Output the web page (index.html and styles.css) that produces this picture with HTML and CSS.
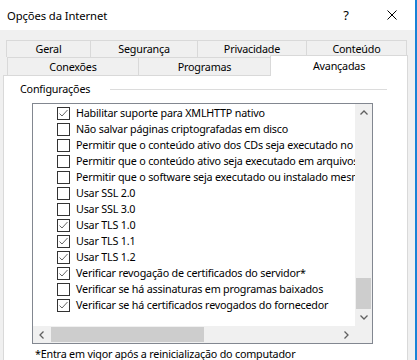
FILE: index.html
```html
<!DOCTYPE html>
<html lang="pt">
<head>
    <meta charset="UTF-8">
    <title>Opções da Internet</title>
    <link rel="stylesheet" href="styles.css">
</head>
<body>
<div class="window">
    <div class="titlebar">
        <span class="title">Opções da Internet</span>
        <span class="tbtn help">?</span>
        <span class="tbtn close">
            <svg width="10" height="10" viewBox="0 0 10 10"><path d="M0.5 0.5L9.5 9.5M9.5 0.5L0.5 9.5" stroke="#000" stroke-width="1" fill="none"/></svg>
        </span>
    </div>
    <div class="frame">
        <div class="tabrow row1">
            <div class="tab t-geral">Geral</div>
            <div class="tab t-seg">Segurança</div>
            <div class="tab t-priv">Privacidade</div>
            <div class="tab t-cont">Conteúdo</div>
        </div>
        <div class="tabrow row2">
            <div class="tab t-conex">Conexões</div>
            <div class="tab t-prog">Programas</div>
            <div class="tab t-avanc active">Avançadas</div>
        </div>
        <div class="panel">
            <div class="group-head">
                <span>Configurações</span>
                <span class="rule"></span>
            </div>
            <div class="listbox">
                <div class="items">
                    <div class="item"><span class="cb checked"></span>Habilitar suporte para XMLHTTP nativo</div>
                    <div class="item"><span class="cb"></span>Não salvar páginas criptografadas em disco</div>
                    <div class="item"><span class="cb"></span>Permitir que o conteúdo ativo dos CDs seja executado no computador</div>
                    <div class="item"><span class="cb"></span>Permitir que o conteúdo ativo seja executado em arquivos do computador</div>
                    <div class="item"><span class="cb"></span>Permitir que o software seja executado ou instalado mesmo que a assinatura seja inválida</div>
                    <div class="item"><span class="cb"></span>Usar SSL 2.0</div>
                    <div class="item"><span class="cb"></span>Usar SSL 3.0</div>
                    <div class="item"><span class="cb checked"></span>Usar TLS 1.0</div>
                    <div class="item"><span class="cb checked"></span>Usar TLS 1.1</div>
                    <div class="item"><span class="cb checked"></span>Usar TLS 1.2</div>
                    <div class="item"><span class="cb checked"></span>Verificar revogação de certificados do servidor*</div>
                    <div class="item"><span class="cb"></span>Verificar se há assinaturas em programas baixados</div>
                    <div class="item"><span class="cb checked"></span>Verificar se há certificados revogados do fornecedor</div>
                </div>
                <div class="vscroll">
                    <span class="arrow"><svg width="8" height="5" viewBox="0 0 8 5"><path d="M0.5 4.5L4 1L7.5 4.5" stroke="#606060" stroke-width="1.3" fill="none"/></svg></span>
                    <span class="vtrack"><span class="vthumb"></span></span>
                    <span class="arrow"><svg width="8" height="5" viewBox="0 0 8 5"><path d="M0.5 0.5L4 4L7.5 0.5" stroke="#606060" stroke-width="1.3" fill="none"/></svg></span>
                </div>
                <div class="hscroll">
                    <span class="arrow"><svg width="5" height="8" viewBox="0 0 5 8"><path d="M4.5 0.5L1 4L4.5 7.5" stroke="#606060" stroke-width="1.3" fill="none"/></svg></span>
                    <span class="htrack"><span class="hthumb"></span></span>
                    <span class="arrow"><svg width="5" height="8" viewBox="0 0 5 8"><path d="M0.5 0.5L4 4L0.5 7.5" stroke="#606060" stroke-width="1.3" fill="none"/></svg></span>
                </div>
                <div class="corner"></div>
            </div>
            <div class="note">*Entra em vigor após a reinicialização do computador</div>
        </div>
    </div>
</div>
</body>
</html>
```

FILE: styles.css
```css
* {
    box-sizing: border-box;
}

body {
    margin: 0;
    font-family: "Noto Sans", "Open Sans", sans-serif;
    font-size: 10.75px;
    letter-spacing: -0.2px;
    color: #000;
}

.window {
    width: 417px;
    height: 360px;
    overflow: hidden;
    background: #f0f0f0;
    border-right: 2px solid #1883d7;
    display: flex;
    flex-direction: column;
}

.titlebar {
    height: 30px;
    flex-shrink: 0;
    background: #fff;
    display: flex;
    align-items: center;
    padding-left: 7px;
    font-size: 11.25px;
    letter-spacing: -0.1px;
}

.title {
    flex: 1;
}

.tbtn {
    width: 46px;
    height: 30px;
    display: flex;
    align-items: center;
    justify-content: center;
}

.help {
    font-size: 13px;
}

.frame {
    padding: 10px 7px 0 3px;
}

.tabrow {
    display: flex;
    align-items: flex-start;
}

.row1 {
    margin-left: 3px;
}

.row2 {
    margin-left: 4px;
}

.tab {
    border: 1px solid #d9d9d9;
    border-bottom: 0;
    background: #f0f0f0;
    display: flex;
    align-items: center;
    justify-content: center;
    white-space: nowrap;
}

.tab + .tab {
    margin-left: -1px;
}

.row1 .tab {
    height: 17px;
}

.row2 .tab {
    height: 18px;
}

.t-geral { width: 85px; }
.t-seg { width: 108px; }
.t-priv { width: 110px; }
.t-cont { width: 101px; }
.t-conex { width: 132px; }
.t-prog { width: 133px; }
.t-avanc { width: 138px; }

.row2 .tab.active {
    background: #fff;
    height: 21px;
    margin-top: -2px;
    margin-bottom: -1px;
    position: relative;
    z-index: 1;
}

.panel {
    border: 1px solid #d9d9d9;
    background: #fff;
    height: 300px;
    padding-top: 5px;
}

.group-head {
    display: flex;
    align-items: center;
    height: 16px;
    padding-left: 16px;
}

.rule {
    width: 277px;
    margin-left: auto;
    margin-right: 20px;
    border-top: 1px solid #dcdcdc;
}

.listbox {
    margin: 6px 0 0 28px;
    width: 341px;
    height: 241px;
    border: 1px solid #828790;
    display: grid;
    grid-template-columns: 1fr 17px;
    grid-template-rows: 1fr 17px;
}

.items {
    overflow: hidden;
    padding-top: 1px;
}

.item {
    height: 16px;
    display: flex;
    align-items: center;
    padding-left: 24px;
    white-space: nowrap;
}

.cb {
    width: 13px;
    height: 13px;
    flex-shrink: 0;
    border: 1px solid #333;
    background: #fff;
    margin-right: 6px;
}

.cb.checked {
    background: #fff url("data:image/svg+xml,%3Csvg xmlns='http://www.w3.org/2000/svg' width='11' height='11'%3E%3Cpath d='M1.5 5.5L4 8L9.5 2' stroke='%23666' stroke-width='1' fill='none'/%3E%3C/svg%3E") no-repeat center;
}

.vscroll {
    background: #f0f0f0;
    display: flex;
    flex-direction: column;
}

.arrow {
    width: 17px;
    height: 17px;
    flex-shrink: 0;
    display: flex;
    align-items: center;
    justify-content: center;
}

.vtrack {
    flex: 1;
    display: flex;
    flex-direction: column;
    justify-content: flex-end;
}

.vthumb {
    height: 31px;
    margin: 0 1px;
    background: #cdcdcd;
}

.hscroll {
    background: #f0f0f0;
    display: flex;
}

.htrack {
    flex: 1;
    padding: 1px 0 1px 1px;
}

.hthumb {
    display: block;
    width: 153px;
    height: 15px;
    background: #cdcdcd;
}

.corner {
    background: #f0f0f0;
}

.note {
    margin: 2px 0 0 31px;
    line-height: 16px;
    white-space: nowrap;
}
```
